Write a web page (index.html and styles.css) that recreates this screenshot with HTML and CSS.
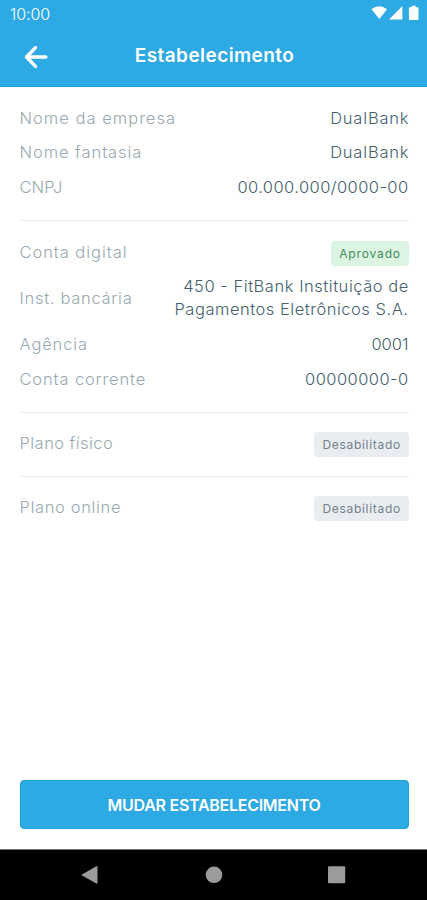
FILE: index.html
```html
<!DOCTYPE html>
<html lang="pt-BR">
<head>
<meta charset="utf-8">
<title>Estabelecimento</title>
<link rel="stylesheet" href="styles.css">
</head>
<body>
<header class="header">
  <div class="status">
    <span class="clock">10:00</span>
    <svg class="status-icons" width="50" height="17" viewBox="0 0 50 17" fill="#fff"><path d="M0.5 4.2Q8.2-1.7 16 4.2L8.4 14Z"/><path d="M18 14.4 31.4 1V14.4Z"/><path d="M38.6 2.3h2.1V.8h4v1.5h2.1q.7 0 .7.7v11.1q0 .8-.7.8h-8.2q-.7 0-.7-.8V3q0-.7.8-.7Z"/></svg>
  </div>
  <div class="titlebar">
    <svg class="back" width="26" height="26" viewBox="0 0 26 26" fill="none" stroke="#fff" stroke-width="3.4" stroke-linecap="round" stroke-linejoin="round"><path d="M12.5 3.6 3.5 13l9 9.4M4 13H22.9"/></svg>
    <h1 class="title">Estabelecimento</h1>
  </div>
</header>
<main class="content">
  <section class="group">
    <div class="row"><span class="label l-empresa">Nome da empresa</span><span class="value v-bank">DualBank</span></div>
    <div class="row"><span class="label l-fantasia">Nome fantasia</span><span class="value v-bank">DualBank</span></div>
    <div class="row"><span class="label l-cnpj">CNPJ</span><span class="value v-cnpj">00.000.000/0000-00</span></div>
  </section>
  <section class="group">
    <div class="row"><span class="label l-digital">Conta digital</span><span class="badge approved">Aprovado</span></div>
    <div class="row"><span class="label l-inst">Inst. bancária</span><span class="value"><span class="line v-inst1">450 - FitBank Instituição de</span><span class="line v-inst2">Pagamentos Eletrônicos S.A.</span></span></div>
    <div class="row"><span class="label l-agencia">Agência</span><span class="value v-agencia">0001</span></div>
    <div class="row"><span class="label l-corrente">Conta corrente</span><span class="value v-conta">00000000-0</span></div>
  </section>
  <section class="group plan"><div class="row"><span class="label l-fisico">Plano físico</span><span class="badge">Desabilitado</span></div></section>
  <section class="group plan"><div class="row"><span class="label l-online">Plano online</span><span class="badge">Desabilitado</span></div></section>
  <button class="action">MUDAR ESTABELECIMENTO</button>
</main>
<nav class="navbar">
  <svg width="427" height="50" viewBox="0 0 427 50" fill="#9b9b9b"><path d="M82 23.5 96.3 15.2q1.2-.5 1.2.8v15.8q0 1.2-1.2.7L82 24.6q-.8-.5 0-1.1Z"/><circle cx="214" cy="23.8" r="8.3"/><rect x="328" y="15.2" width="17.2" height="17" rx="1"/></svg>
</nav>
</body>
</html>
```
FILE: styles.css
```css
* { box-sizing: border-box; }
body {
  margin: 0;
  height: 900px;
  display: flex;
  flex-direction: column;
  background: #fff;
  font-family: Inter, "Open Sans", sans-serif;
  font-size: 16.5px;
  font-weight: 300;
  line-height: 23px;
  overflow: hidden;
}
.header { height: 87px; background: #2da9e3; border-bottom: 1px solid #1d9fda; color: #fff; }
.status { height: 28px; padding: 0 8px 0 10px; display: flex; justify-content: space-between; align-items: center; }
.clock { font-size: 16px; font-weight: 300; letter-spacing: -.1px; }
.status-icons { margin: -1px -2px 0 0; }
.titlebar { height: 58px; display: grid; grid-template-columns: 64px 1fr 64px; align-items: center; }
.back { margin-left: 23px; }
.title { margin: -3px 0 0 2px; text-align: center; font-size: 19px; font-weight: 600; letter-spacing: .43px; white-space: nowrap; }
.content { flex: 1; padding: 0 18.5px 20px 19.5px; display: flex; flex-direction: column; }
.group { padding: 19.7px 0 21.2px; display: flex; flex-direction: column; gap: 11.6px; border-bottom: 1px solid #eaeeef; }
.plan { padding-bottom: 20.3px; }
.group:nth-last-of-type(1) { border: 0; }
.row { display: flex; justify-content: space-between; align-items: center; }
.label, .line, .value { white-space: nowrap; }
.label { color: #98a9b2; }
.value { color: #455f6e; text-align: right; }
.line { display: block; }
.l-empresa { letter-spacing: 1.02px; }
.l-fantasia, .l-digital { letter-spacing: .94px; }
.l-cnpj { letter-spacing: .1px; }
.l-inst { letter-spacing: .7px; }
.l-agencia, .l-corrente { letter-spacing: .86px; }
.l-fisico { letter-spacing: .45px; }
.l-online { letter-spacing: .65px; }
.v-bank { letter-spacing: .8px; margin-right: -.8px; }
.v-cnpj, .v-conta { letter-spacing: .42px; }
.v-inst1 { letter-spacing: .54px; margin-right: -.4px; }
.v-inst2 { letter-spacing: .52px; }
.badge { height: 25px; margin: 0 0 -2px; padding: 0 7.6px 0 8.3px; border-radius: 4px; background: #e9edf1; color: #73818b; font-size: 12px; font-weight: 400; line-height: 25px; letter-spacing: .7px; }
.approved { background: #dcf5e3; color: #408d59; letter-spacing: .85px; }
.action { margin-top: auto; height: 49px; border: 1px solid #1ca0dc; border-radius: 4px; background: #2da9e3; color: #fff; font: 600 16px/1 Inter, sans-serif; letter-spacing: -.27px; }
.navbar { height: 51px; padding-top: 1px; background: #000; border-top: 1px solid #777; }
.navbar svg { display: block; }
```
